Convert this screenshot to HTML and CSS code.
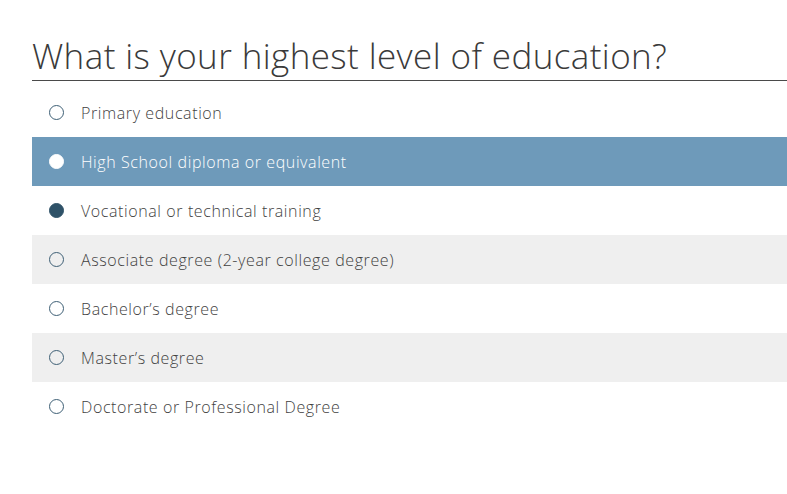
FILE: index.html
```html
<!DOCTYPE html>
<html lang="en">
<head>
    <meta charset="UTF-8">
    <meta name="viewport" content="width=device-width, initial-scale=1.0">
    <title>Education</title>
    <link rel="stylesheet" href="styles.css">
</head>
<body>
    <div class="question">
        <h1 class="q-title">What is your highest level of education?</h1>
        <ul class="q-list">
            <li class="q-item"><span class="radio"></span>Primary education</li>
            <li class="q-item hover"><span class="radio"></span>High School diploma or equivalent</li>
            <li class="q-item"><span class="radio checked"></span>Vocational or technical training</li>
            <li class="q-item alt"><span class="radio"></span>Associate degree (2-year college degree)</li>
            <li class="q-item"><span class="radio"></span>Bachelor’s degree</li>
            <li class="q-item alt"><span class="radio"></span>Master’s degree</li>
            <li class="q-item"><span class="radio"></span>Doctorate or Professional Degree</li>
        </ul>
    </div>
</body>
</html>
```
FILE: styles.css
```css
* {margin: 0; padding: 0; box-sizing: border-box;}
body {background: #fff; font-family: "Open Sans", "Liberation Sans", sans-serif; color: #444;}
ul {list-style: none;}
.question {padding: 35px 0 0 32px;}
.q-title {font-size: 35px; font-weight: 300; line-height: 42px; color: #3a3a3a; padding-bottom: 3px; border-bottom: 1px solid #4a4a4a; letter-spacing: 0.4px;}
.q-list {margin-top: 7px;}
.q-item {display: flex; align-items: center; height: 49px; padding-left: 17px; font-size: 16px; font-weight: 300; color: #3f3f3f; letter-spacing: 0.6px;}
.q-item.alt {background: #efefef;}
.q-item.hover {background: #6e9aba; color: #fff;}
.radio {width: 15px; height: 15px; border-radius: 50%; border: 1.5px solid #3e5f75; margin-right: 17px; flex-shrink: 0;}
.radio.checked {background: #2f5268; border-color: #2f5268;}
.q-item.hover .radio {background: #fff; border-color: #fff;}
```
